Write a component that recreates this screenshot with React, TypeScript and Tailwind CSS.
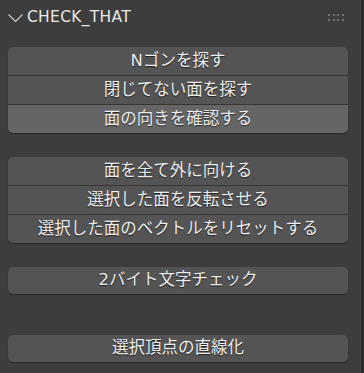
import React from "react";

type Group = { items: string[]; active?: number; gap: string };

const groups: Group[] = [
  { items: ["Nゴンを探す", "閉じてない面を探す", "面の向きを確認する"], active: 2, gap: "mt-[12px]" },
  { items: ["面を全て外に向ける", "選択した面を反転させる", "選択した面のベクトルをリセットする"], gap: "mt-[24px]" },
  { items: ["2バイト文字チェック"], gap: "mt-[24px]" },
  { items: ["選択頂点の直線化"], gap: "mt-[41px]" },
];

const GripDots = () => (
  <div className="grid grid-cols-4 gap-x-[2.7px] gap-y-[2.7px]">
    {Array.from({ length: 8 }).map((_, i) => (
      <span key={i} className="block w-[2px] h-[2px] bg-[#707070]" />
    ))}
  </div>
);

export default function App() {
  return (
    <div
      className="w-[364px] h-[373px] flex bg-[#2b2b2b] overflow-hidden"
      style={{ fontFamily: '"DejaVu Sans", "Noto Sans CJK JP", sans-serif' }}
    >
      <div className="w-[361px] h-full bg-[#3d3d3d] border-r border-[#474747] flex flex-col">
        <div className="h-[35px] flex items-center pl-[7px] pr-[16px]">
          <svg width="17" height="10" viewBox="0 0 17 10" className="mr-[3px]">
            <path d="M1.5 1.5 L8.5 8.5 L15.5 1.5" fill="none" stroke="#cfcfcf" strokeWidth="1.2" />
          </svg>
          <span className="text-[15.5px] text-[#e8e8e8] tracking-[0.3px]">CHECK_THAT</span>
          <div className="ml-auto">
            <GripDots />
          </div>
        </div>
        <div className="px-[8px] pr-[12px]">
          {groups.map((g, gi) => (
            <div
              key={gi}
              className={`${g.gap} rounded-[5px] overflow-hidden shadow-[0_1px_1px_rgba(0,0,0,0.35)] flex flex-col gap-[1px] bg-[#353535]`}
            >
              {g.items.map((t, i) => (
                <div
                  key={i}
                  className={`${g.items.length > 1 ? "h-[28px]" : "h-[27px]"} flex items-center justify-center text-[16.5px] text-[#ececec] [text-shadow:0_1px_1px_rgba(0,0,0,0.6)] ${
                    g.active === i ? "bg-[#656565]" : "bg-[#545454]"
                  }`}
                >
                  {t}
                </div>
              ))}
            </div>
          ))}
        </div>
      </div>
    </div>
  );
}
